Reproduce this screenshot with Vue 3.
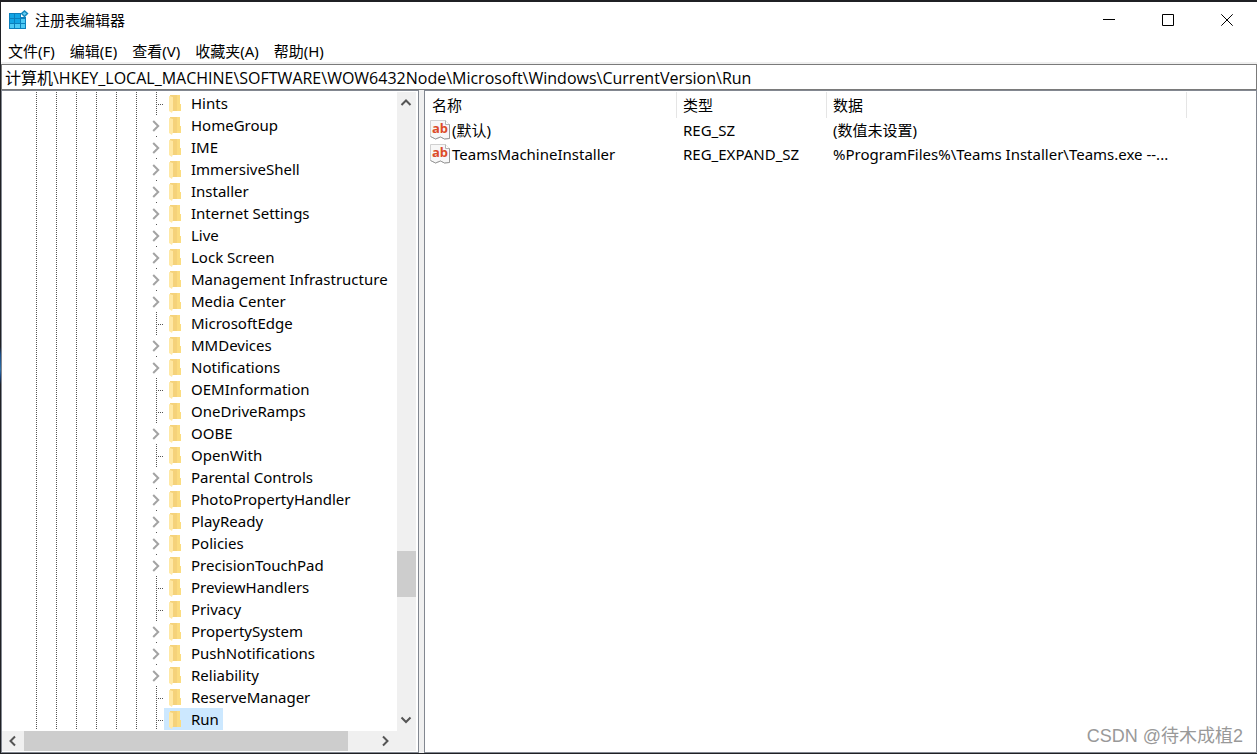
<script setup>
import { ref } from 'vue'

const menus = ['文件(F)', '编辑(E)', '查看(V)', '收藏夹(A)', '帮助(H)']
const path = ref('计算机\\HKEY_LOCAL_MACHINE\\SOFTWARE\\WOW6432Node\\Microsoft\\Windows\\CurrentVersion\\Run')
const selected = ref('Run')

const leaf = (name) => ({ name, open: false })
const branch = (name) => ({ name, open: true })
const keys = [
  leaf('Hints'), branch('HomeGroup'), branch('IME'), branch('ImmersiveShell'),
  branch('Installer'), branch('Internet Settings'), branch('Live'), branch('Lock Screen'),
  branch('Management Infrastructure'), branch('Media Center'), leaf('MicrosoftEdge'),
  branch('MMDevices'), branch('Notifications'), leaf('OEMInformation'), leaf('OneDriveRamps'),
  branch('OOBE'), leaf('OpenWith'), branch('Parental Controls'), branch('PhotoPropertyHandler'),
  branch('PlayReady'), branch('Policies'), branch('PrecisionTouchPad'), leaf('PreviewHandlers'),
  leaf('Privacy'), branch('PropertySystem'), branch('PushNotifications'), branch('Reliability'),
  leaf('ReserveManager'), leaf('Run'),
]

const values = [
  { name: '(默认)', type: 'REG_SZ', data: '(数值未设置)' },
  { name: 'TeamsMachineInstaller', type: 'REG_EXPAND_SZ', data: '%ProgramFiles%\\Teams Installer\\Teams.exe --...' },
]
</script>

<template>
  <div class="desktop">
    <div class="window">
      <header class="titlebar">
        <svg class="app-icon" viewBox="0 0 20 20" aria-hidden="true">
          <path d="M0 3h12v4h5v12H0z" fill="#0b7fbc" />
          <path d="M1 4h4v4H1zM6 4h5v4H6zM1 9h4v4H1zM6 9h5v4H6z" fill="#12a4e4" />
          <path d="M12 9h4v4h-4zM1 14h4v4H1zM6 14h5v4H6zM12 14h4v4h-4z" fill="#4cc9f4" />
          <path d="M15.500 0l4 3.500-4 4-4-4z" fill="#1487bd" />
          <path d="M15.500 2l2 1.500-2 2-2-2z" fill="#63cdf2" />
        </svg>
        <h1>注册表编辑器</h1>
        <div class="controls">
          <button type="button" aria-label="最小化">
            <svg viewBox="0 0 12 12"><path d="M0 5.500h12" /></svg>
          </button>
          <button type="button" aria-label="最大化">
            <svg viewBox="0 0 12 12"><path d="M.5.500h11v11H.5z" /></svg>
          </button>
          <button type="button" aria-label="关闭">
            <svg viewBox="0 0 12 12"><path d="M.3.300l11.400 11.400M11.700.300L.3 11.700" /></svg>
          </button>
        </div>
      </header>

      <nav class="menubar">
        <button v-for="m in menus" :key="m" type="button">{{ m }}</button>
      </nav>

      <input v-model="path" class="address" type="text" aria-label="地址" spellcheck="false" />

      <main class="panes">
        <section class="tree-pane">
          <div class="tree-view">
            <ul class="tree" role="tree">
              <li
                v-for="k in keys"
                :key="k.name"
                role="treeitem"
                :aria-selected="selected === k.name"
                :class="k.open ? 'branch' : 'leaf'"
              >
                <span class="joint">
                  <button v-if="k.open" type="button" class="expander" :aria-label="'展开 ' + k.name">
                    <svg viewBox="0 0 8 12"><path d="M1.200 1l5 5-5 5" /></svg>
                  </button>
                </span>
                <button type="button" class="key" :class="{ selected: selected === k.name }" @click="selected = k.name">
                  <svg class="folder" viewBox="0 0 12 18" aria-hidden="true">
                    <path d="M1 0h10v9h1v7H2z" fill="#f5d27a" />
                    <path d="M8 0h3v9h1v7H8z" fill="#fbdc80" />
                    <path d="M0 1l4 1v13l-1 3-3-2z" fill="#ffe8a4" />
                  </svg>
                  <span>{{ k.name }}</span>
                </button>
              </li>
            </ul>
            <div class="vbar">
              <button type="button" aria-label="向上滚动"><svg viewBox="0 0 12 12"><path d="M1.500 8L6 3.500 10.500 8" /></svg></button>
              <div class="vtrack"><div class="vthumb"></div></div>
              <button type="button" aria-label="向下滚动"><svg viewBox="0 0 12 12"><path d="M1.500 2.500L6 7l4.500-4.500" /></svg></button>
            </div>
          </div>
          <div class="hbar">
            <button type="button" aria-label="向左滚动"><svg viewBox="0 0 12 12"><path d="M8 1.500L3.500 6 8 10.500" /></svg></button>
            <div class="htrack"><div class="hthumb"></div></div>
            <button type="button" aria-label="向右滚动"><svg viewBox="0 0 12 12"><path d="M3 1.500L7.500 6 3 10.500" /></svg></button>
            <div class="corner"></div>
          </div>
        </section>

        <section class="list-pane">
          <table>
            <colgroup><col class="c-name" /><col class="c-type" /><col class="c-data" /><col /></colgroup>
            <thead>
              <tr><th scope="col">名称</th><th scope="col">类型</th><th scope="col">数据</th><td></td></tr>
            </thead>
            <tbody>
              <tr v-for="v in values" :key="v.name">
                <td class="name">
                  <div>
                    <svg viewBox="0 0 20 20" aria-hidden="true">
                      <path d="M.5.500h15l4 4v14l-5 .5-4-2-5 2-5-2.500z" fill="#f7f7f7" stroke="#d0d0d0" />
                      <path d="M15.500.500v4h4" fill="#fff" stroke="#b4b4b4" />
                      <path d="M.5 16.500l5 2.500 5-2 4 2 5-.5v-14" fill="none" stroke="#999" />
                      <text x="2" y="13">ab</text>
                    </svg>
                    <span>{{ v.name }}</span>
                  </div>
                </td>
                <td>{{ v.type }}</td>
                <td>{{ v.data }}</td>
                <td></td>
              </tr>
            </tbody>
          </table>
        </section>
      </main>
    </div>
    <p class="watermark">CSDN @待木成植2</p>
  </div>
</template>

<style>
body {
  background: #1f2024;
}
</style>

<style scoped>
.desktop {
  position: relative;
  box-sizing: border-box;
  height: 100vh;
  padding: 2px 0 1px 1px;
  background: linear-gradient(#1f2024 46%, #174a86 47%, #2d6ea5 49%, #123f7c 50%, #1f2024 51%);
  font-family: "Noto Sans", "Noto Sans CJK SC", sans-serif;
  font-size: 15px;
  line-height: 22px;
  color: #000;
  overflow: hidden;
}
.window {
  display: flex;
  flex-direction: column;
  height: 100%;
  background: #fff;
}
button {
  margin: 0;
  padding: 0;
  border: 0;
  background: none;
  font: inherit;
  color: inherit;
}
.titlebar {
  display: flex;
  align-items: center;
  height: 36px;
  flex: none;
  padding-left: 8px;
}
.app-icon {
  width: 20px;
  height: 20px;
}
h1 {
  margin: 0 0 0 6px;
  font-size: 15px;
  line-height: 22px;
  font-weight: 400;
}
.controls {
  display: flex;
  align-self: stretch;
  margin-left: auto;
}
.controls button {
  display: flex;
  align-items: center;
  justify-content: center;
  width: 59px;
}
.controls svg {
  width: 12px;
  height: 12px;
  margin-right: 1px;
  fill: none;
  stroke: #000;
}
.menubar {
  box-sizing: border-box;
  display: flex;
  gap: 15px;
  height: 26px;
  flex: none;
  padding: 2px 0 0 7px;
  border-bottom: 2px solid #f0f0f0;
}
.address {
  box-sizing: border-box;
  width: 100%;
  height: 26px;
  flex: none;
  margin: 0;
  padding: 0 3px 1px;
  border: 1px solid #7a7a7a;
  outline: 0;
  background: #fff;
  font-family: "Open Sans", "Noto Sans CJK SC", sans-serif;
  font-size: 16px;
  color: inherit;
}
.panes {
  display: flex;
  flex: 1;
  min-height: 0;
  background: #f0f0f0;
}
.tree-pane {
  box-sizing: border-box;
  display: flex;
  flex-direction: column;
  flex: none;
  width: 418px;
  margin-right: 5px;
  padding: 1px 2px 1px 0;
  border: 1px solid #828790;
  background: #fff;
}
.tree-view {
  display: flex;
  flex: 1;
  min-height: 0;
}
.tree {
  flex: 1;
  min-width: 0;
  margin: 0;
  padding: 0 0 0 34px;
  list-style: none;
  overflow: hidden;
}
.tree li {
  display: flex;
  height: 22px;
  padding-left: 120px;
  background:
    repeating-linear-gradient(transparent 0 1px, #fff 1px 2px),
    repeating-linear-gradient(90deg, #555 0 1px, #fff 1px 20px) 0 0 / 120px 22px no-repeat;
}
.joint {
  display: flex;
  align-items: center;
  width: 8px;
  flex: none;
  background: linear-gradient(#555, #555) 0 0 / 1px 1px no-repeat;
}
.leaf .joint {
  background:
    repeating-linear-gradient(90deg, #fff 0 1px, transparent 1px 2px) 1px 12px / 7px 1px no-repeat,
    linear-gradient(#555, #555) 1px 12px / 7px 1px no-repeat,
    repeating-linear-gradient(#555 0 1px, #fff 1px 2px) 0 0 / 1px 22px no-repeat;
}
.expander {
  display: flex;
  margin: 2px 0 0 -4px;
}
.expander svg {
  width: 8px;
  height: 12px;
  fill: none;
  stroke: #a3a3a3;
  stroke-width: 2;
}
.key {
  display: flex;
  align-items: center;
  height: 22px;
  padding: 0 4px 0 5px;
  white-space: nowrap;
}
.key.selected {
  background: #cce8ff;
}
.folder {
  width: 12px;
  height: 18px;
  margin: 2px 10px 0 0;
}
.vbar {
  display: flex;
  flex-direction: column;
  width: 19px;
  flex: none;
  background: #f0f0f0;
}
.vbar button,
.hbar button {
  display: flex;
  align-items: center;
  justify-content: center;
  flex: none;
}
.vbar button {
  height: 21px;
}
.vbar svg,
.hbar svg {
  width: 12px;
  height: 12px;
  fill: none;
  stroke: #555;
  stroke-width: 2;
}
.vbar svg {
  margin-right: 1px;
}
.vtrack {
  flex: 1;
  display: grid;
  grid-template-rows: 438fr 46fr 113fr;
}
.vthumb {
  grid-row: 2;
  background: #cdcdcd;
}
.hbar {
  display: flex;
  height: 20px;
  flex: none;
  background: #f0f0f0;
}
.hbar button {
  width: 22px;
}
.htrack {
  flex: 1;
  display: grid;
  grid-template-columns: 324fr 27fr;
}
.hthumb {
  background: #cdcdcd;
}
.corner {
  width: 19px;
}
.list-pane {
  flex: 1;
  min-width: 0;
  padding-top: 1px;
  border: 1px solid #828790;
  background: #fff;
  overflow: hidden;
}
table {
  width: 100%;
  table-layout: fixed;
  border-collapse: collapse;
}
.c-name {
  width: 252px;
}
.c-type {
  width: 150px;
}
.c-data {
  width: 360px;
}
th,
td {
  height: 24px;
  padding: 0 0 0 6px;
  text-align: left;
  font-weight: 400;
  white-space: nowrap;
}
th {
  height: 26px;
  padding-left: 7px;
  background: linear-gradient(#e5e5e5, #e5e5e5) right / 1px 100% no-repeat;
}
th + th {
  padding-left: 6px;
}
.name div {
  display: flex;
  align-items: center;
  gap: 2px;
}
td.name {
  padding-left: 5px;
}
.name svg {
  width: 20px;
  height: 20px;
  flex: none;
}
.name text {
  font: bold 13px "Open Sans", sans-serif;
  fill: #dc4b28;
}
.watermark {
  position: absolute;
  right: 14px;
  bottom: 6px;
  margin: 0;
  font-family: "Liberation Sans", "Noto Sans CJK SC", sans-serif;
  font-size: 18px;
  line-height: 24px;
  color: #999;
}
</style>
